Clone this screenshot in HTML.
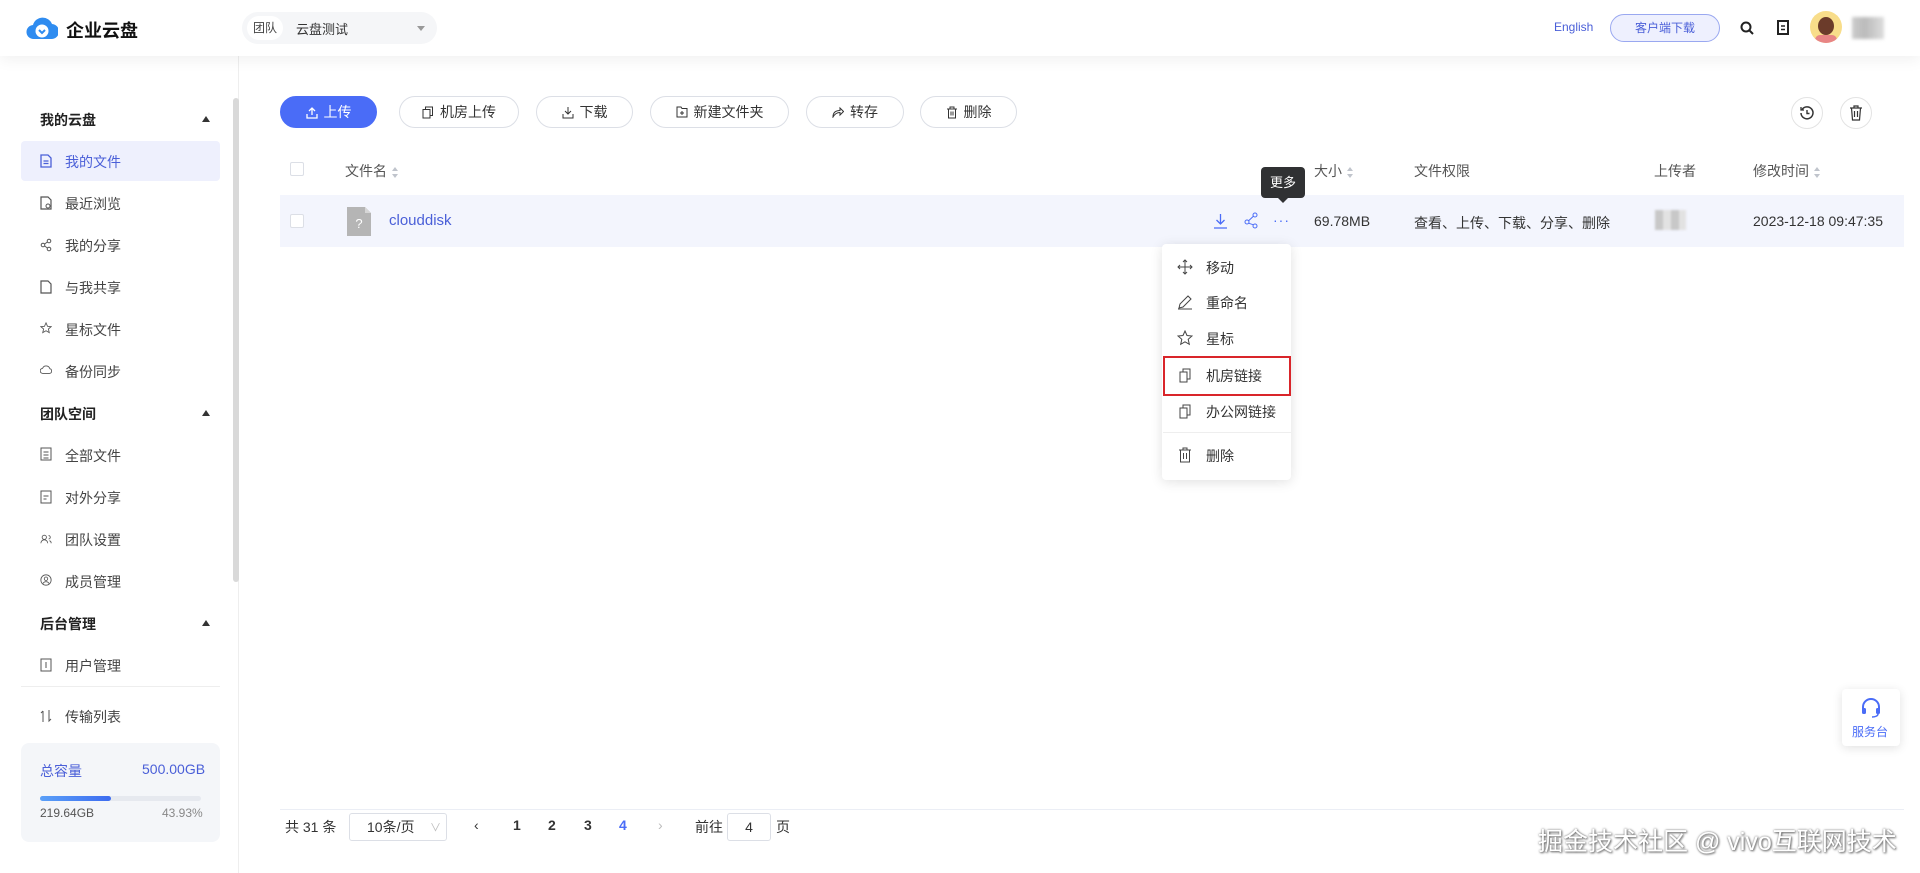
<!DOCTYPE html>
<html><head><meta charset="utf-8">
<style>
*{box-sizing:border-box;margin:0;padding:0}
body{width:1920px;height:873px;overflow:hidden;background:#fff;font-family:"Liberation Sans","Noto Sans CJK SC",sans-serif;font-size:14px;color:#333;position:relative}
.abs{position:absolute}
.header{position:absolute;left:0;top:0;width:1920px;height:56px;background:#fff;box-shadow:0 4px 14px rgba(0,0,0,.06);z-index:2}
.side{position:absolute;left:0;top:56px;width:239px;height:817px;border-right:1px solid #eee;background:#fff}
.grp{position:absolute;left:40px;font-weight:bold;font-size:14px;color:#222}
.arr{position:absolute;left:202px;width:0;height:0;border-left:4px solid transparent;border-right:4px solid transparent;border-bottom:6px solid #333}
.item{position:absolute;left:65px;font-size:14px;color:#444}
.ic{position:absolute;left:40px;width:12px;height:14px}
.btn{position:absolute;top:96px;height:32px;border:1px solid #dcdfe6;border-radius:16px;font-size:14px;color:#333;display:flex;align-items:center;justify-content:center;gap:6px;background:#fff}
.th{position:absolute;top:161px;font-size:14px;color:#555}
.sort{display:inline-block;vertical-align:middle;margin-left:5px;width:7px;height:11px;position:relative}
.sort:before{content:"";position:absolute;top:0;left:0;border-left:3.5px solid transparent;border-right:3.5px solid transparent;border-bottom:4px solid #c0c4cc}
.sort:after{content:"";position:absolute;bottom:0;left:0;border-left:3.5px solid transparent;border-right:3.5px solid transparent;border-top:4px solid #c0c4cc}
.cb{position:absolute;width:14px;height:14px;border:1px solid #dcdfe6;border-radius:2px;background:#fff}
.mi{position:absolute;left:1206px;font-size:14px;color:#333}
.mic{position:absolute;left:1177px}
.pg{position:absolute;top:817px;font-size:14px;color:#333}
</style></head><body>

<div class="header">
  <svg class="abs" style="left:26px;top:15px" width="32" height="26" viewBox="0 0 32 26"><path d="M8 24 A7 7 0 0 1 7 10 A10 10 0 0 1 26 9 A7.5 7.5 0 0 1 25 24 Z" fill="#2f8cf0"/><circle cx="16" cy="16" r="6.5" fill="#fff"/><path d="M13 15 l3 3 l3-3" stroke="#2f8cf0" stroke-width="2" fill="none"/></svg>
  <div class="abs" style="left:66px;top:17px;font-size:18px;font-weight:bold;color:#111">企业云盘</div>
  <div class="abs" style="left:242px;top:12px;width:195px;height:32px;border-radius:16px;background:#f5f6f8"></div>
  <div class="abs" style="left:247px;top:16px;width:36px;height:24px;border-radius:12px;background:#fff;font-size:12px;color:#444;text-align:center;line-height:24px">团队</div>
  <div class="abs" style="left:296px;top:19px;font-size:13px;color:#333">云盘测试</div>
  <div class="abs" style="left:417px;top:26px;border-left:4px solid transparent;border-right:4px solid transparent;border-top:5px solid #999"></div>
  <div class="abs" style="left:1554px;top:20px;font-size:12px;color:#4a5fd8">English</div>
  <div class="abs" style="left:1610px;top:14px;width:110px;height:28px;border:1px solid #9aa8f0;border-radius:14px;background:#eef0fe;color:#4a5fd8;font-size:12px;text-align:center;line-height:26px">客户端下载</div>
  <svg class="abs" style="left:1740px;top:21px" width="14" height="14" viewBox="0 0 14 14"><circle cx="6" cy="6" r="4.5" stroke="#222" stroke-width="2" fill="none"/><path d="M9.5 9.5 L13 13" stroke="#222" stroke-width="2"/></svg>
  <svg class="abs" style="left:1777px;top:20px" width="12" height="15" viewBox="0 0 12 15"><rect x="1" y="1" width="10" height="13" stroke="#222" stroke-width="2" fill="none"/><path d="M4 6h4M4 9.5h4" stroke="#222" stroke-width="1.5"/></svg>
  <div class="abs" style="left:1810px;top:11px;width:32px;height:32px;border-radius:50%;background:#f8dd8a;overflow:hidden"><div style="position:absolute;left:8px;top:6px;width:16px;height:18px;border-radius:50%;background:#6b3b2a"></div><div style="position:absolute;left:5px;top:24px;width:22px;height:10px;border-radius:6px;background:#e88585"></div></div>
  <div class="abs" style="left:1852px;top:17px;width:32px;height:22px;background:linear-gradient(90deg,#ccc,#bbb 40%,#ddd);filter:blur(1.5px)"></div>
</div>

<div class="side">
  <div class="abs" style="left:233px;top:42px;width:6px;height:484px;border-radius:3px;background:#d9d9d9"></div>
</div>
<!-- sidebar contents in page coords -->
<div class="grp" style="top:110px">我的云盘</div><div class="arr" style="top:116px"></div>
<div class="abs" style="left:21px;top:141px;width:199px;height:40px;border-radius:4px;background:#eef0fd"></div>
<svg class="ic" style="top:154px" viewBox="0 0 12 14"><path d="M1 1h7l3 3v9H1z" stroke="#4a5fd8" stroke-width="1.3" fill="none"/><path d="M3.5 7h5M3.5 9.5h5" stroke="#4a5fd8" stroke-width="1.2"/></svg>
<div class="item" style="top:152px;color:#4a5fd8">我的文件</div>
<svg class="ic" style="top:196px" viewBox="0 0 12 14"><path d="M1 1h7l3 3v9H1z" stroke="#555" stroke-width="1.2" fill="none"/><circle cx="8" cy="10" r="2" stroke="#555" fill="none"/></svg>
<div class="item" style="top:194px">最近浏览</div>
<svg class="ic" style="top:238px" viewBox="0 0 12 14"><circle cx="3" cy="7" r="1.8" stroke="#555" fill="none"/><circle cx="9" cy="3" r="1.8" stroke="#555" fill="none"/><circle cx="9" cy="11" r="1.8" stroke="#555" fill="none"/><path d="M4.5 6L7.5 4M4.5 8L7.5 10" stroke="#555"/></svg>
<div class="item" style="top:236px">我的分享</div>
<svg class="ic" style="top:280px" viewBox="0 0 12 14"><path d="M1 1h7l3 3v9H1z" stroke="#555" stroke-width="1.2" fill="none"/></svg>
<div class="item" style="top:278px">与我共享</div>
<svg class="ic" style="top:321px" viewBox="0 0 14 14"><path d="M7 1l1.8 4 4.2.4-3.2 2.8 1 4.2L7 10.2 3.2 12.4l1-4.2L1 5.4 5.2 5z" stroke="#555" fill="none"/></svg>
<div class="item" style="top:320px">星标文件</div>
<svg class="ic" style="top:363px" viewBox="0 0 14 14"><path d="M3.5 11A3 3 0 0 1 3 5a4.5 4.5 0 0 1 8.5 0.5A2.8 2.8 0 0 1 11 11z" stroke="#555" fill="none"/></svg>
<div class="item" style="top:362px">备份同步</div>
<div class="grp" style="top:404px">团队空间</div><div class="arr" style="top:410px"></div>
<svg class="ic" style="top:447px" viewBox="0 0 12 14"><rect x="1" y="1" width="10" height="12" stroke="#555" fill="none"/><path d="M3.5 5h5M3.5 8h5M3.5 11h5" stroke="#555"/></svg>
<div class="item" style="top:446px">全部文件</div>
<svg class="ic" style="top:490px" viewBox="0 0 12 14"><rect x="1" y="1" width="10" height="12" stroke="#555" fill="none"/><path d="M3.5 6h5M3.5 9h3" stroke="#555"/></svg>
<div class="item" style="top:488px">对外分享</div>
<svg class="ic" style="top:532px" viewBox="0 0 14 14"><circle cx="5" cy="5" r="2.5" stroke="#555" fill="none"/><path d="M1 12a4 4 0 0 1 8 0M10 3a2 2 0 0 1 0 4M11 9a3 3 0 0 1 2 3" stroke="#555" fill="none"/></svg>
<div class="item" style="top:530px">团队设置</div>
<svg class="ic" style="top:573px" viewBox="0 0 14 14"><circle cx="7" cy="7" r="6" stroke="#555" fill="none"/><circle cx="7" cy="5.5" r="2" stroke="#555" fill="none"/><path d="M3.5 11a4 4 0 0 1 7 0" stroke="#555" fill="none"/></svg>
<div class="item" style="top:572px">成员管理</div>
<div class="grp" style="top:614px">后台管理</div><div class="arr" style="top:620px"></div>
<svg class="ic" style="top:658px" viewBox="0 0 12 14"><rect x="1" y="1" width="10" height="12" stroke="#555" fill="none"/><path d="M6 4v6" stroke="#555"/></svg>
<div class="item" style="top:656px">用户管理</div>
<div class="abs" style="left:21px;top:686px;width:199px;height:1px;background:#eee"></div>
<svg class="ic" style="top:709px" viewBox="0 0 12 14"><path d="M3 2v11M1 4l2-2M9 1v11l2-2" stroke="#555" fill="none"/></svg>
<div class="item" style="top:707px">传输列表</div>
<div class="abs" style="left:21px;top:743px;width:199px;height:99px;border-radius:8px;background:#f4f6f9"></div>
<div class="abs" style="left:40px;top:761px;font-size:14px;color:#4a5fd8">总容量</div>
<div class="abs" style="left:142px;top:761px;font-size:14px;color:#4a5fd8">500.00GB</div>
<div class="abs" style="left:40px;top:796px;width:161px;height:5px;border-radius:3px;background:#e6e9ef"></div>
<div class="abs" style="left:40px;top:796px;width:71px;height:5px;border-radius:3px;background:linear-gradient(90deg,#5aa0f8,#3d6cf0)"></div>
<div class="abs" style="left:40px;top:806px;font-size:12px;color:#555">219.64GB</div>
<div class="abs" style="left:162px;top:806px;font-size:12px;color:#888">43.93%</div>

<!-- toolbar -->
<div class="btn" style="left:280px;width:97px;background:#4a6cf7;border-color:#4a6cf7;color:#fff">
<svg width="12" height="13" viewBox="0 0 12 13"><path d="M6 9V2M3 5l3-3 3 3M1 8v4h10V8" stroke="#fff" stroke-width="1.3" fill="none"/></svg>上传</div>
<div class="btn" style="left:399px;width:120px"><svg width="12" height="13" viewBox="0 0 12 13"><rect x="1" y="3.5" width="7" height="8.5" stroke="#333" fill="none"/><path d="M3.5 3.5V1h7v8.5H8" stroke="#333" fill="none"/></svg>机房上传</div>
<div class="btn" style="left:536px;width:97px"><svg width="12" height="13" viewBox="0 0 12 13"><path d="M6 1v7M3 5l3 3 3-3M1 8v4h10V8" stroke="#333" fill="none"/></svg>下载</div>
<div class="btn" style="left:650px;width:139px"><svg width="12" height="12" viewBox="0 0 12 12"><path d="M1 1h4l1 1.5h5V11H1z" stroke="#333" fill="none"/><path d="M6 5v4M4 7h4" stroke="#333"/></svg>新建文件夹</div>
<div class="btn" style="left:806px;width:98px"><svg width="12" height="12" viewBox="0 0 12 12"><path d="M1 11c0-5 3-6.5 7-6.5V2l3.5 3.5L8 9V6.5C5 6.5 3 7.5 1 11z" stroke="#333" fill="none"/></svg>转存</div>
<div class="btn" style="left:920px;width:97px"><svg width="12" height="13" viewBox="0 0 12 13"><path d="M1 3h10M4 3V1h4v2M2.5 3v9h7V3M5 5.5v4M7 5.5v4" stroke="#333" fill="none"/></svg>删除</div>
<div class="abs" style="left:1791px;top:97px;width:32px;height:32px;border:1px solid #e3e3e3;border-radius:50%"></div>
<svg class="abs" style="left:1799px;top:105px" width="16" height="16" viewBox="0 0 16 16"><path d="M3 4.5A6 6 0 1 1 2 8" stroke="#333" stroke-width="1.5" fill="none"/><path d="M2 2v3h3" stroke="#333" stroke-width="1.3" fill="none"/><path d="M8 5v3.5h2.5" stroke="#333" stroke-width="1.4" fill="none"/></svg>
<div class="abs" style="left:1840px;top:97px;width:32px;height:32px;border:1px solid #e3e3e3;border-radius:50%"></div>
<svg class="abs" style="left:1848px;top:104px" width="16" height="18" viewBox="0 0 16 18"><path d="M2 4h12M6 4V2h4v2M3.5 4l1 12h7l1-12M6.5 7v6M9.5 7v6" stroke="#333" stroke-width="1.2" fill="none"/></svg>

<!-- table header -->
<div class="cb" style="left:290px;top:162px"></div>
<div class="th" style="left:345px">文件名<span class="sort"></span></div>
<div class="th" style="left:1314px">大小<span class="sort"></span></div>
<div class="th" style="left:1414px">文件权限</div>
<div class="th" style="left:1654px">上传者</div>
<div class="th" style="left:1753px">修改时间<span class="sort"></span></div>

<!-- row -->
<div class="abs" style="left:280px;top:195px;width:1624px;height:52px;background:#f3f5fd"></div>
<div class="cb" style="left:290px;top:214px"></div>
<svg class="abs" style="left:347px;top:207px" width="24" height="29" viewBox="0 0 24 29"><path d="M0 0h18l6 6v23H0z" fill="#b5b5b5"/><path d="M18 0v6h6" fill="#d6d6d6"/><text x="12" y="21" font-size="13" fill="#fff" text-anchor="middle" font-family="Liberation Sans">?</text></svg>
<div class="abs" style="left:389px;top:212px;font-size:15px;color:#4a5fd8">clouddisk</div>
<svg class="abs" style="left:1213px;top:213px" width="15" height="16" viewBox="0 0 15 16"><path d="M7.5 1v10M3.5 7l4 4 4-4M1 15h13" stroke="#4a6cf7" stroke-width="1.3" fill="none"/></svg>
<svg class="abs" style="left:1244px;top:212px" width="15" height="17" viewBox="0 0 15 17"><circle cx="3" cy="10" r="2" stroke="#4a6cf7" fill="none"/><circle cx="11" cy="3" r="2" stroke="#4a6cf7" fill="none"/><circle cx="11" cy="14" r="2" stroke="#4a6cf7" fill="none"/><path d="M4.6 8.8L9.4 4.3M4.6 11.2L9.4 12.8" stroke="#4a6cf7"/></svg>
<div class="abs" style="left:1273px;top:212px;font-size:14px;color:#4a6cf7;letter-spacing:1px">···</div>
<div class="abs" style="left:1314px;top:213px;font-size:14px">69.78MB</div>
<div class="abs" style="left:1414px;top:213px;font-size:14px">查看、上传、下载、分享、删除</div>
<div class="abs" style="left:1655px;top:210px;width:31px;height:20px;background:repeating-linear-gradient(90deg,#c8c8c8 0 8px,#e2e2e2 8px 16px);filter:blur(1px)"></div>
<div class="abs" style="left:1753px;top:213px;font-size:14px">2023-12-18 09:47:35</div>

<!-- tooltip -->
<div class="abs" style="left:1261px;top:167px;width:44px;height:31px;background:#303133;border-radius:4px;color:#fff;font-size:13px;text-align:center;line-height:31px">更多</div>
<div class="abs" style="left:1278px;top:198px;border-left:5px solid transparent;border-right:5px solid transparent;border-top:5px solid #303133"></div>

<!-- menu -->
<div class="abs" style="left:1162px;top:244px;width:129px;height:236px;background:#fff;border-radius:4px;box-shadow:0 2px 12px rgba(0,0,0,.12)"></div>
<svg class="mic" style="top:259px" width="16" height="16" viewBox="0 0 16 16"><path d="M8 1v14M1 8h14M6 3l2-2 2 2M6 13l2 2 2-2M3 6L1 8l2 2M13 6l2 2-2 2" stroke="#444" fill="none"/></svg>
<div class="mi" style="top:258px">移动</div>
<svg class="mic" style="top:294px" width="16" height="16" viewBox="0 0 16 16"><path d="M2 14l1-4 8-8 3 3-8 8zM1 15h14" stroke="#444" fill="none"/></svg>
<div class="mi" style="top:293px">重命名</div>
<svg class="mic" style="top:330px" width="16" height="16" viewBox="0 0 16 16"><path d="M8 1l2 4.5 5 .5-3.8 3.3 1.1 5L8 11.8 3.7 14.3l1.1-5L1 6l5-.5z" stroke="#444" fill="none"/></svg>
<div class="mi" style="top:329px">星标</div>
<div class="abs" style="left:1163px;top:356px;width:128px;height:40px;border:2px solid #d9252a"></div>
<svg class="mic" style="top:367px" width="16" height="16" viewBox="0 0 16 16"><rect x="3" y="5" width="7" height="10" stroke="#444" fill="none"/><path d="M6 5V2h7v10h-3" stroke="#444" fill="none"/></svg>
<div class="mi" style="top:366px">机房链接</div>
<svg class="mic" style="top:403px" width="16" height="16" viewBox="0 0 16 16"><rect x="3" y="5" width="7" height="10" stroke="#444" fill="none"/><path d="M6 5V2h7v10h-3" stroke="#444" fill="none"/></svg>
<div class="mi" style="top:402px">办公网链接</div>
<div class="abs" style="left:1163px;top:432px;width:128px;height:1px;background:#eee"></div>
<svg class="mic" style="top:447px" width="16" height="16" viewBox="0 0 16 16"><path d="M2 3h12M6 3V1h4v2M3.5 3v12h9V3M6.5 6v6M9.5 6v6" stroke="#444" fill="none"/></svg>
<div class="mi" style="top:446px">删除</div>

<!-- pagination -->
<div class="abs" style="left:280px;top:809px;width:1624px;height:1px;background:#ebeef5"></div>
<div class="pg" style="left:285px">共 31 条</div>
<div class="abs" style="left:349px;top:813px;width:98px;height:28px;border:1px solid #dcdfe6;border-radius:3px"></div>
<div class="pg" style="left:367px">10条/页</div>
<div class="pg" style="left:430px;color:#bbb;font-size:11px;top:819px">∨</div>
<div class="pg" style="left:474px">‹</div>
<div class="pg" style="left:513px;font-weight:bold">1</div>
<div class="pg" style="left:548px;font-weight:bold">2</div>
<div class="pg" style="left:584px;font-weight:bold">3</div>
<div class="pg" style="left:619px;font-weight:bold;color:#4a6cf7">4</div>
<div class="pg" style="left:658px;color:#bbb">›</div>
<div class="pg" style="left:695px">前往</div>
<div class="abs" style="left:727px;top:813px;width:44px;height:28px;border:1px solid #dcdfe6;border-radius:3px;text-align:center;line-height:26px;font-size:14px">4</div>
<div class="pg" style="left:776px">页</div>

<!-- service -->
<div class="abs" style="left:1842px;top:689px;width:58px;height:57px;background:#fff;border-radius:4px;box-shadow:0 2px 10px rgba(0,0,0,.12)"></div>
<svg class="abs" style="left:1860px;top:697px" width="22" height="22" viewBox="0 0 22 22"><path d="M3 13V10a8 8 0 0 1 16 0v3" stroke="#4a6cf7" stroke-width="2" fill="none"/><rect x="2" y="11" width="4" height="6" rx="1.5" fill="#4a6cf7"/><rect x="16" y="11" width="4" height="6" rx="1.5" fill="#4a6cf7"/><path d="M18 17c0 2-3 3-6 3" stroke="#4a6cf7" stroke-width="1.5" fill="none"/></svg>
<div class="abs" style="left:1852px;top:723px;font-size:12px;color:#4a6cf7">服务台</div>

<!-- watermark -->
<div class="abs" style="left:1538px;top:822px;font-size:25px;color:#fff;text-shadow:0 0 2px #777,1px 1px 2px #666">掘金技术社区 @ vivo互联网技术</div>
</body></html>
